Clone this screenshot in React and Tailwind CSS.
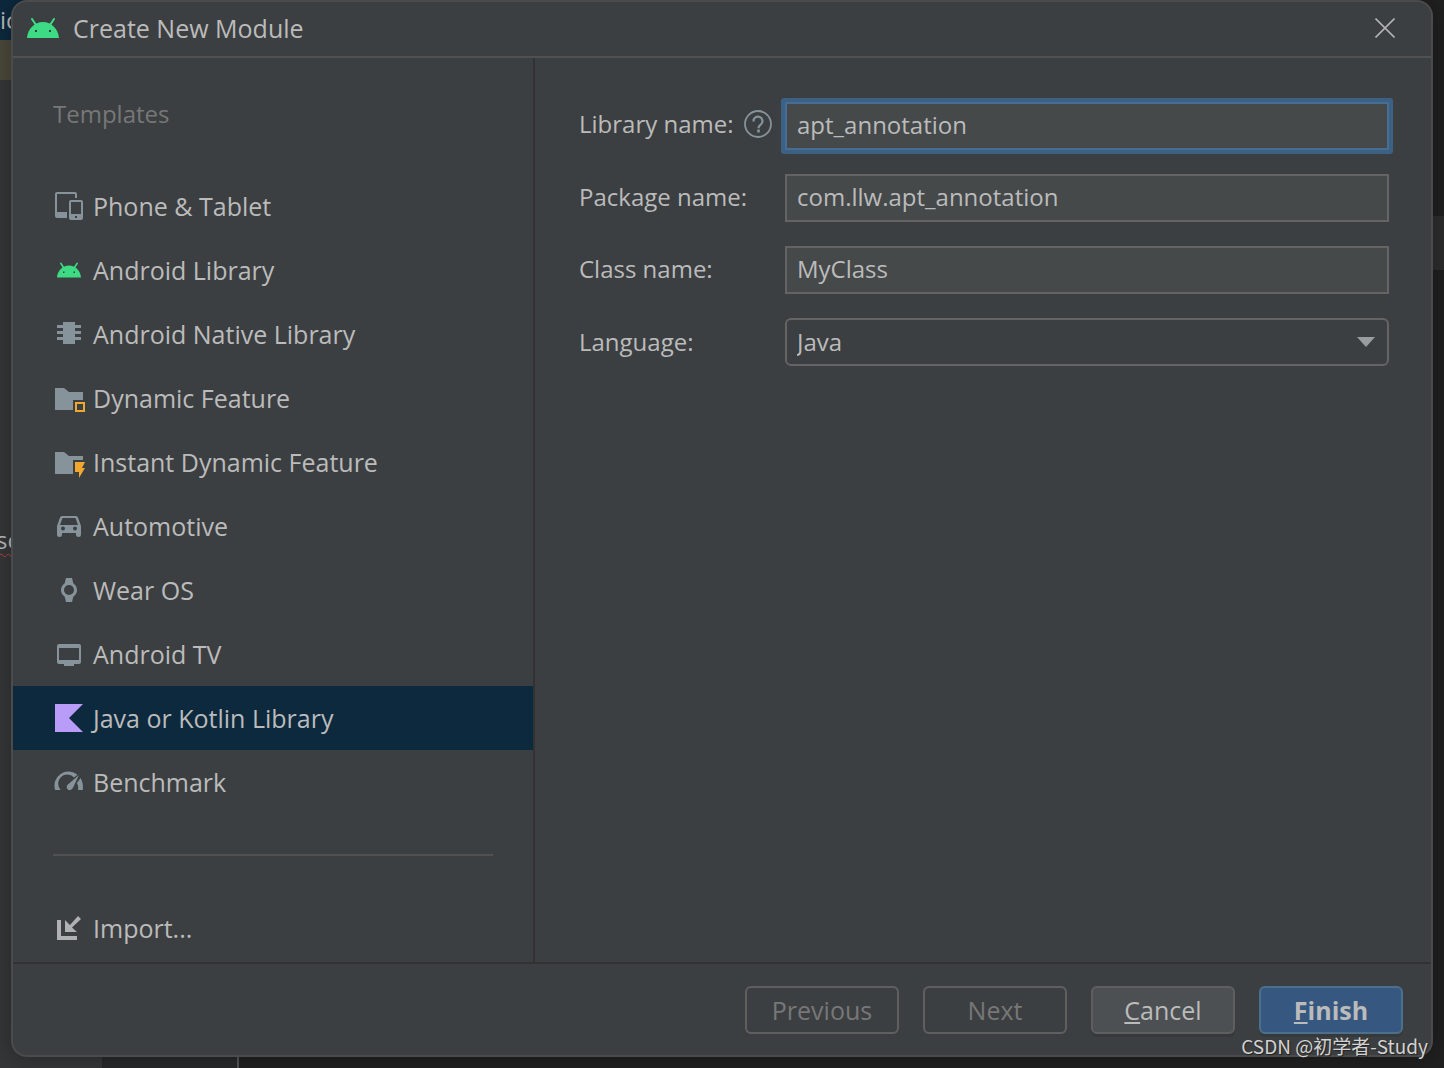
import React from "react";

const GREY = "#87939a";

function AndroidIcon({ className }) {
  return (
    <svg className={className} viewBox="0 0 32 20" aria-hidden="true">
      <path d="M5 1 L9 7 M27 1 L23 7" stroke="#3ddc84" strokeWidth="2" strokeLinecap="round" />
      <path
        fill="#3ddc84"
        fillRule="evenodd"
        d="M0 20C.6 11 7.500 4 16 4s15.400 7 16 16zM8 12v2h2v-2zM22 12v2h2v-2z"
      />
    </svg>
  );
}

function Glyph({ children }) {
  return (
    <svg className="h-8 w-8 shrink-0" viewBox="0 0 32 32" fill={GREY} aria-hidden="true">
      {children}
    </svg>
  );
}

const ICONS = {
  phone: (
    <Glyph>
      <path d="M4 2h18a2 2 0 0 1 2 2v4h-2V4H4v18h10v6H4a2 2 0 0 1-2-2V4a2 2 0 0 1 2-2z" />
      <path
        fillRule="evenodd"
        d="M18 10h10a2 2 0 0 1 2 2v16a2 2 0 0 1-2 2H18a2 2 0 0 1-2-2V12a2 2 0 0 1 2-2zm0 2v12h10V12zm4 14v2h2v-2z"
      />
    </Glyph>
  ),
  android: (
    <span className="flex h-8 w-8 shrink-0 items-center justify-center">
      <AndroidIcon className="h-4 w-6" />
    </span>
  ),
  chip: (
    <Glyph>
      <path d="M10 4h12v3h6v3h-6v3h6v3h-6v3h6v3h-6v4H10v-4H4v-3h6v-3H4v-3h6v-3H4V7h6z" />
    </Glyph>
  ),
  feature: (
    <Glyph>
      <path d="M2 6h9l5 4h14v8h-10v10H2z" />
      <path d="M23 21h8v8h-8z" fill="none" stroke="#f0a732" strokeWidth="2" />
    </Glyph>
  ),
  instant: (
    <Glyph>
      <path d="M2 6h9l5 4h14v4H20v14H2z" />
      <path d="M22 16h10l-3 6h3l-6 10v-6h-4z" fill="#f0a732" />
    </Glyph>
  ),
  car: (
    <Glyph>
      <path
        fillRule="evenodd"
        d="M9 6h14q1.500 0 2 1.500L28 16v9q0 2-2.500 2T23 25v-2H9v2q0 2-2.500 2T4 25v-9l3-8.500Q7.500 6 9 6zm.5 2L7 15h18l-2.500-7zM10 16.500a2 2 0 1 0 0 4 2 2 0 0 0 0-4zm12 0a2 2 0 1 0 0 4 2 2 0 0 0 0-4z"
      />
    </Glyph>
  ),
  watch: (
    <Glyph>
      <path
        fillRule="evenodd"
        d="M13 4h6l1.300 5.200Q24 12 24 16t-3.700 6.800L19 28h-6l-1.300-5.200Q8 20 8 16t3.700-6.800zM16 11a5 5 0 1 0 0 10 5 5 0 0 0 0-10z"
      />
    </Glyph>
  ),
  tv: (
    <Glyph>
      <path
        fillRule="evenodd"
        d="M6 6h20a2 2 0 0 1 2 2v16a2 2 0 0 1-2 2h-5v2H11v-2H6a2 2 0 0 1-2-2V8a2 2 0 0 1 2-2zm0 4v12h20V10z"
      />
    </Glyph>
  ),
  kotlin: (
    <Glyph>
      <path d="M2 2h28L16 16l14 14H2z" fill="#b99bf8" />
    </Glyph>
  ),
  gauge: (
    <Glyph>
      <path d="M2.200 24A14 14 0 0 1 24.500 8.800L21 11.500A9 9 0 0 0 7.600 24z" />
      <path d="M27.500 12Q30.500 17 29.800 24h-4.600q.6-4-1.200-7z" />
      <path d="M26 9l-6 12.800q-2 3.500-5 2-2.400-2.200-.4-5z" />
    </Glyph>
  ),
  import: (
    <Glyph>
      <path d="M4 8h4v16h16v4H4zM12 8l5 5 8-9 3 3-9 8.500 5 4.500H12z" fill="#afb1b3" />
    </Glyph>
  ),
};

const TEMPLATES = [
  ["phone", "Phone & Tablet"],
  ["android", "Android Library"],
  ["chip", "Android Native Library"],
  ["feature", "Dynamic Feature"],
  ["instant", "Instant Dynamic Feature"],
  ["car", "Automotive"],
  ["watch", "Wear OS"],
  ["tv", "Android TV"],
  ["kotlin", "Java or Kotlin Library"],
  ["gauge", "Benchmark"],
];

function Item({ icon, label, selected }) {
  return (
    <button
      type="button"
      aria-current={selected ? "true" : undefined}
      className={
        "flex h-16 w-full items-center gap-2 pl-10 text-left whitespace-nowrap " +
        (selected ? "bg-[#0d293e]" : "")
      }
    >
      {ICONS[icon]}
      <span>{label}</span>
    </button>
  );
}

function Editor() {
  return (
    <div className="col-start-1 row-start-1 flex bg-[#222222]" aria-hidden="true">
      <div className="flex w-[102px] flex-col bg-[#343638] text-2xl leading-10">
        <div className="h-10 bg-[#0d293e]">ic</div>
        <div className="h-10 bg-[#4b483b]" />
        <div className="mt-[440px] -ml-1 underline decoration-[#bc3f3c] decoration-wavy decoration-1 underline-offset-4">
          sc
        </div>
      </div>
      <div className="w-[135px] bg-[#27282a]" />
      <div className="w-0.5 bg-[#555555]" />
      <div className="flex flex-1 flex-col bg-[#202020]">
        <div className="mt-[216px] ml-auto h-[54px] w-3 bg-[#2d2d2d]" />
      </div>
    </div>
  );
}

const FIELD = "h-12 w-full min-w-0 border-2 px-2.5 text-[#bbbbbb] outline-none ";

export default function App() {
  return (
    <main className="grid min-h-screen font-['Open_Sans','Noto_Sans',sans-serif] text-[25px] leading-8 text-[#bbbbbb]">
      <Editor />
      <section
        role="dialog"
        aria-labelledby="dialog-title"
        className="z-10 col-start-1 row-start-1 mx-[11px] mb-[11px] flex flex-col overflow-hidden rounded-2xl border-2 border-[#4b4b4c] bg-[#3c3f41] shadow-[0_0_24px_rgba(0,0,0,0.3)]"
      >
        <header className="flex h-14 items-center border-b-2 border-[#515151] pr-9 pb-0.5 pl-3.5">
          <AndroidIcon className="h-5 w-8" />
          <h1 id="dialog-title" className="ml-3.5 flex-1">
            Create New Module
          </h1>
          <button type="button" aria-label="Close">
            <svg className="h-5 w-5" viewBox="0 0 20 20" stroke="#afb1b3" strokeWidth="1.600">
              <path d="M.5.5l19 19M19.500.5l-19 19" />
            </svg>
          </button>
        </header>

        <div className="flex flex-1">
          <nav aria-labelledby="templates" className="w-[522px] shrink-0 border-r-2 border-[#323232]">
            <h2 id="templates" className="mt-10 mb-11 pl-10 text-2xl leading-8 text-[#777777]">
              Templates
            </h2>
            <div>
              {TEMPLATES.map(([icon, label]) => (
                <Item key={icon} icon={icon} label={label} selected={icon === "kotlin"} />
              ))}
            </div>
            <hr className="mx-10 mt-10 border-t-2 border-[#515151]" />
            <div className="mt-10">
              <Item icon="import" label="Import..." />
            </div>
          </nav>

          <form className="grid flex-1 auto-rows-max grid-cols-[182px_minmax(0,1fr)] content-start items-center gap-6 pt-11 pr-[42px] pl-11 text-2xl leading-8">
            <div className="flex items-center gap-2.5 pb-1 whitespace-nowrap">
              <label htmlFor="library">Library name:</label>
              <button type="button" aria-label="Help" className="shrink-0">
                <svg className="h-7 w-7" viewBox="0 0 28 28" fill="none" stroke={GREY}>
                  <circle cx="14" cy="14" r="13" strokeWidth="1.800" />
                  <path d="M9.500 11.500a4.500 4.500 0 1 1 7.200 3.200q-2.200 1.500-2.200 3.500" strokeWidth="2.200" />
                  <path d="M14.500 19.600v2.800" strokeWidth="2.600" />
                </svg>
              </button>
            </div>
            <input
              id="library"
              type="text"
              defaultValue="apt_annotation"
              className={FIELD + "rounded-[1px] border-[#466d94] bg-[#45494a] pb-1 ring-4 ring-[#3d6185]"}
            />
            <label htmlFor="package" className="pb-0.5">Package name:</label>
            <input
              id="package"
              type="text"
              defaultValue="com.llw.apt_annotation"
              className={FIELD + "border-[#646464] bg-[#45494a] pb-1"}
            />
            <label htmlFor="class" className="pb-0.5">Class name:</label>
            <input
              id="class"
              type="text"
              defaultValue="MyClass"
              className={FIELD + "border-[#646464] bg-[#45494a] pb-1"}
            />
            <label htmlFor="language">Language:</label>
            <div className="grid items-center">
              <select
                id="language"
                defaultValue="Java"
                className={FIELD + "col-start-1 row-start-1 appearance-none rounded-md border-[#646464] bg-[#3c3f41]"}
              >
                <option>Java</option>
                <option>Kotlin</option>
              </select>
              <svg
                className="pointer-events-none col-start-1 row-start-1 mr-3.5 h-2.5 w-[18px] justify-self-end"
                viewBox="0 0 18 10"
                fill="#9a9da0"
                aria-hidden="true"
              >
                <path d="M0 0h18L9 10z" />
              </svg>
            </div>
          </form>
        </div>

        <footer className="flex justify-end gap-6 border-t-2 border-[#323232] px-7 pt-[22px] pb-[21px]">
          <button type="button" disabled className="h-12 w-[154px] rounded-md border-2 border-[#5e6060] text-[#777777]">
            Previous
          </button>
          <button type="button" disabled className="h-12 w-36 rounded-md border-2 border-[#5e6060] text-[#777777]">
            Next
          </button>
          <button type="button" className="h-12 w-36 rounded-md border-2 border-[#5e6060] bg-[#4c5052] shadow-[0_3px_0_#36393b]">
            <span className="underline decoration-2 underline-offset-2">C</span>ancel
          </button>
          <button type="button" className="h-12 w-36 rounded-md border-2 border-[#4c708c] bg-[#365880] font-bold shadow-[0_3px_0_#36393b]">
            <span className="underline decoration-2 underline-offset-2">F</span>inish
          </button>
        </footer>
      </section>
      <p className="z-20 col-start-1 row-start-1 mr-4 mb-1.5 self-end justify-self-end font-['Noto_Sans_CJK_SC',sans-serif] text-[19px] text-[#d2d2d2] [text-shadow:1px_1px_1px_#222222]">
        CSDN @初学者-Study
      </p>
    </main>
  );
}
